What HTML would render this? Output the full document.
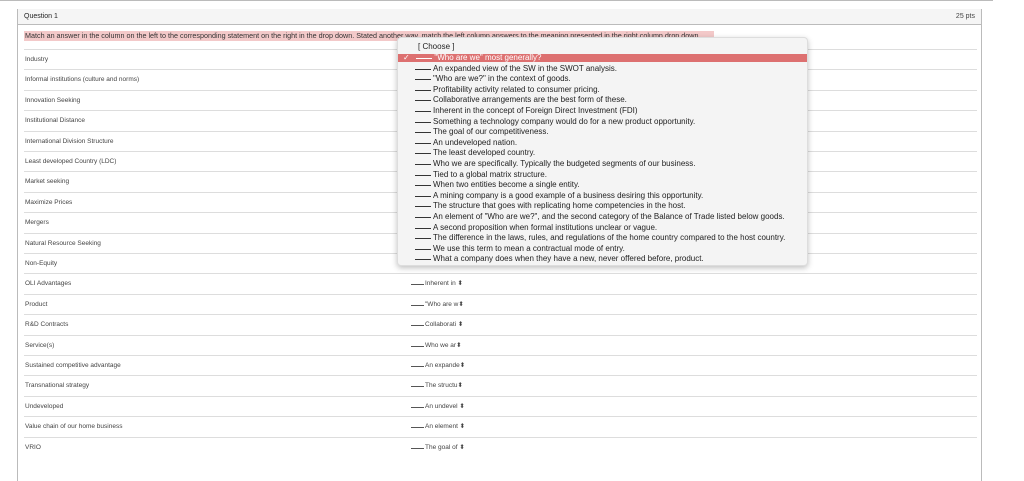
<!DOCTYPE html>
<html><head><style>
*{margin:0;padding:0;box-sizing:border-box}
body{width:1024px;height:481px;background:#fff;font-family:"Liberation Sans",sans-serif;position:relative;overflow:hidden;color:#333}
.topline{position:absolute;left:0;top:0;width:993px;height:1px;background:#bbb}
.box{position:absolute;left:17px;top:9px;width:965px;height:472px;border-left:1px solid #bbb;border-right:1px solid #bbb}
.hdr{position:absolute;left:0;top:0;width:963px;height:16px;background:#f5f5f5;border-bottom:1px solid #bbb;font-size:7px;padding:4px 6px;color:#222}
.hdr span{position:absolute;right:6px;top:4px;color:#444}
.instr{position:absolute;left:6px;top:22px;height:10px;width:690px;background:#f3c9c9;font-size:7.2px;line-height:10px;color:#333;white-space:nowrap;overflow:hidden;padding-left:1px}
.row{position:absolute;left:6px;width:953px;height:20.4px;border-top:1px solid #ddd;font-size:6.5px;line-height:20px;color:#444;padding-left:1px}
.sel{position:absolute;left:387px;top:0;font-size:6.5px;color:#444}
.sel u{display:inline-block;width:13px;border-bottom:1px solid #555;margin-right:1px}
.dd{position:absolute;left:397px;top:37px;width:411px;height:229px;background:#f4f4f4;border:1px solid #ddd;border-radius:4px;box-shadow:0 2px 6px rgba(0,0,0,.25);font-size:8px;color:#222}
.it{position:absolute;left:0;width:409px;height:8px;line-height:8px;padding-left:17px;white-space:nowrap}
.it i{display:inline-block;width:16px;border-bottom:1px solid #333;margin-right:2px;vertical-align:1px}
.it.s{background:#dd7070;color:#fff}
.it.s i{border-color:#fff}
</style></head><body>
<div class="topline"></div>
<div class="box">
<div class="hdr">Question 1<span>25 pts</span></div>
<div class="instr">Match an answer in the column on the left to the corresponding statement on the right in the drop down. Stated another way, match the left column answers to the meaning presented in the right column drop down.</div>
<div class="row" style="top:40px">Industry</div>
<div class="row" style="top:60.4px">Informal institutions (culture and norms)</div>
<div class="row" style="top:80.8px">Innovation Seeking</div>
<div class="row" style="top:101.2px">Institutional Distance</div>
<div class="row" style="top:121.6px">International Division Structure</div>
<div class="row" style="top:142px">Least developed Country (LDC)</div>
<div class="row" style="top:162.4px">Market seeking</div>
<div class="row" style="top:182.8px">Maximize Prices</div>
<div class="row" style="top:203.2px">Mergers</div>
<div class="row" style="top:223.6px">Natural Resource Seeking</div>
<div class="row" style="top:244px">Non-Equity<div class="sel"><u></u>We use this ⬍</div></div>
<div class="row" style="top:264.4px">OLI Advantages<div class="sel"><u></u>Inherent in ⬍</div></div>
<div class="row" style="top:284.8px">Product<div class="sel"><u></u>"Who are w⬍</div></div>
<div class="row" style="top:305.2px">R&amp;D Contracts<div class="sel"><u></u>Collaborati ⬍</div></div>
<div class="row" style="top:325.6px">Service(s)<div class="sel"><u></u>Who we ar⬍</div></div>
<div class="row" style="top:346px">Sustained competitive advantage<div class="sel"><u></u>An expande⬍</div></div>
<div class="row" style="top:366.4px">Transnational strategy<div class="sel"><u></u>The structu⬍</div></div>
<div class="row" style="top:386.8px">Undeveloped<div class="sel"><u></u>An undevel ⬍</div></div>
<div class="row" style="top:407.2px">Value chain of our home business<div class="sel"><u></u>An element ⬍</div></div>
<div class="row" style="top:427.6px">VRIO<div class="sel"><u></u>The goal of ⬍</div></div>
</div>
<div class="dd">
<div class="it" style="top:5px;padding-left:20px">[ Choose ]</div>
<div class="it s" style="top:16px;padding-left:5px">✓&nbsp;&nbsp;&nbsp;<i></i>"Who are we" most generally?</div>
<div class="it" style="top:26.6px"><i></i>An expanded view of the SW in the SWOT analysis.</div>
<div class="it" style="top:37.2px"><i></i>"Who are we?" in the context of goods.</div>
<div class="it" style="top:47.8px"><i></i>Profitability activity related to consumer pricing.</div>
<div class="it" style="top:58.4px"><i></i>Collaborative arrangements are the best form of these.</div>
<div class="it" style="top:69px"><i></i>Inherent in the concept of Foreign Direct Investment (FDI)</div>
<div class="it" style="top:79.6px"><i></i>Something a technology company would do for a new product opportunity.</div>
<div class="it" style="top:90.2px"><i></i>The goal of our competitiveness.</div>
<div class="it" style="top:100.8px"><i></i>An undeveloped nation.</div>
<div class="it" style="top:111.4px"><i></i>The least developed country.</div>
<div class="it" style="top:122px"><i></i>Who we are specifically. Typically the budgeted segments of our business.</div>
<div class="it" style="top:132.6px"><i></i>Tied to a global matrix structure.</div>
<div class="it" style="top:143.2px"><i></i>When two entities become a single entity.</div>
<div class="it" style="top:153.8px"><i></i>A mining company is a good example of a business desiring this opportunity.</div>
<div class="it" style="top:164.4px"><i></i>The structure that goes with replicating home competencies in the host.</div>
<div class="it" style="top:175px"><i></i>An element of "Who are we?", and the second category of the Balance of Trade listed below goods.</div>
<div class="it" style="top:185.6px"><i></i>A second proposition when formal institutions unclear or vague.</div>
<div class="it" style="top:196.2px"><i></i>The difference in the laws, rules, and regulations of the home country compared to the host country.</div>
<div class="it" style="top:206.8px"><i></i>We use this term to mean a contractual mode of entry.</div>
<div class="it" style="top:217.4px"><i></i>What a company does when they have a new, never offered before, product.</div>
</div>
</body></html>
